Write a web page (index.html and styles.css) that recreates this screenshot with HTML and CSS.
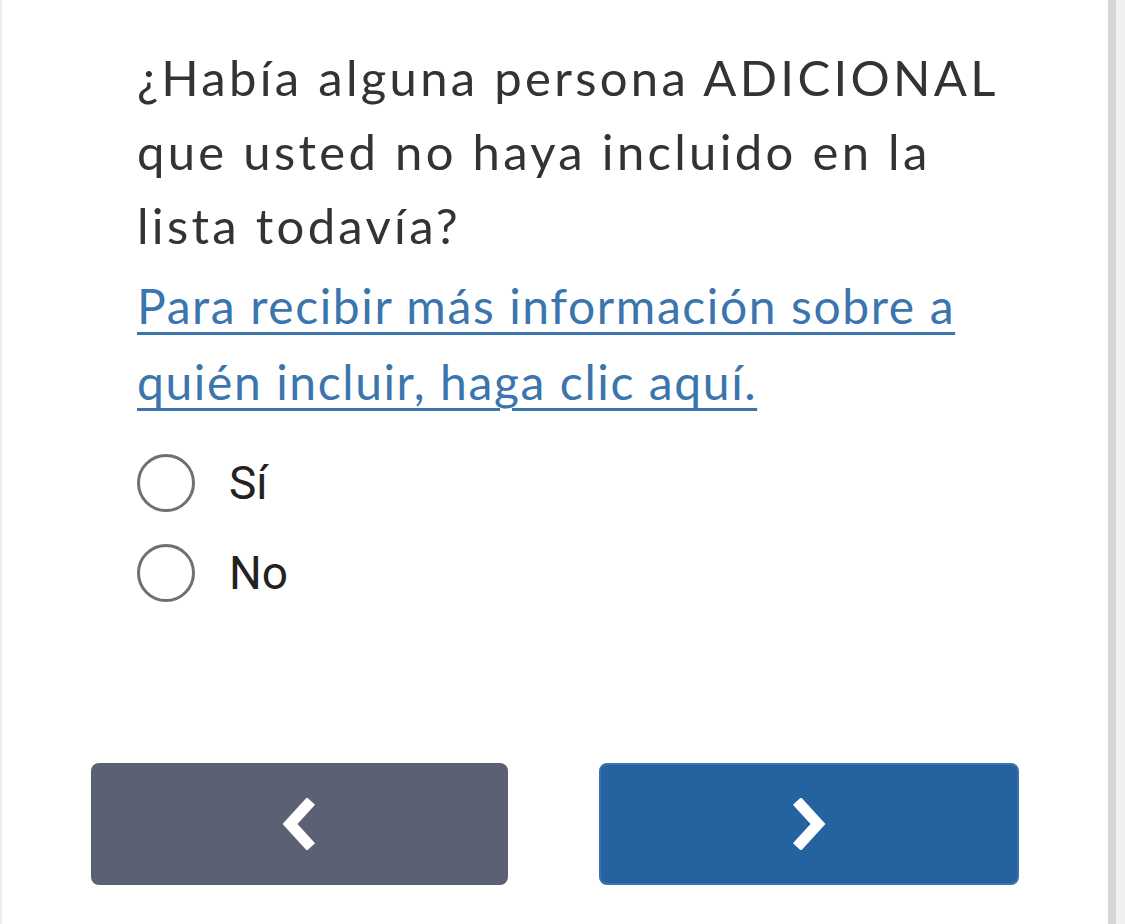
FILE: index.html
```html
<!DOCTYPE html>
<html>
<head>
    <meta name="viewport" content="width=device-width, initial-scale=1.0">
    <link rel="stylesheet" href="styles.css">
</head>
<body>
    <div class="screen">
        <div class="page">
            <div class="question">
                <div class="title">¿Había alguna persona ADICIONAL que usted no haya incluido en la lista todavía?</div>
                <a class="help-link" href="#">Para recibir más información sobre a quién incluir, haga clic aquí.</a>
                <div class="options">
                    <label class="option"><span class="radio"></span><span class="option-text">Sí</span></label>
                    <label class="option"><span class="radio"></span><span class="option-text">No</span></label>
                </div>
            </div>
            <div class="nav">
                <button class="btn btn-back">
                    <svg width="36" height="52" viewBox="0 0 36 52"><polyline points="30,3 9,26 30,49" fill="none" stroke="#fff" stroke-width="11"/></svg>
                </button>
                <button class="btn btn-next">
                    <svg width="36" height="52" viewBox="0 0 36 52"><polyline points="6,3 27,26 6,49" fill="none" stroke="#fff" stroke-width="11"/></svg>
                </button>
            </div>
        </div>
        <div class="scrollbar"><div class="thumb"></div></div>
    </div>
</body>
</html>
```

FILE: styles.css
```css
body {
    margin: 0;
    background: #ffffff;
    font-family: Lato, "Open Sans", sans-serif;
}

.screen {
    display: flex;
    height: 924px;
    border-left: 2px solid #eeeeee;
    box-sizing: border-box;
}

.page {
    flex: 1;
    display: flex;
    flex-direction: column;
    padding: 0 89px 0 89px;
}

.question {
    padding: 40px 0 0 46px;
}

.title {
    color: #333333;
    font-size: 49px;
    line-height: 74px;
    letter-spacing: 3.3px;
    width: 880px;
}

.help-link {
    display: block;
    margin-top: 6px;
    color: #3a76ad;
    font-size: 48px;
    line-height: 76px;
    letter-spacing: 1.6px;
    width: 860px;
    text-decoration: underline;
    text-decoration-thickness: 3px;
    text-underline-offset: 8px;
}

.options {
    display: flex;
    flex-direction: column;
    gap: 32px;
    margin-top: 34px;
}

.option {
    display: flex;
    align-items: center;
    gap: 34px;
    height: 58px;
}

.radio {
    width: 52px;
    height: 52px;
    border: 3px solid #707070;
    border-radius: 50%;
}

.option-text {
    font-family: Roboto, sans-serif;
    font-size: 46px;
    color: #222222;
}

.nav {
    display: flex;
    gap: 91px;
    margin-top: 161px;
}

.btn {
    flex: 1;
    height: 122px;
    border: none;
    border-radius: 8px;
    display: flex;
    justify-content: center;
    align-items: center;
}

.btn-back {
    background: #5b6073;
}

.btn-next {
    background: #2462a0;
    border: 2px solid #3a74ac;
}

.scrollbar {
    width: 17px;
    display: flex;
    justify-content: flex-start;
    background: #f0f0f0;
}

.thumb {
    width: 8px;
    background: #d6d6d9;
}
```
